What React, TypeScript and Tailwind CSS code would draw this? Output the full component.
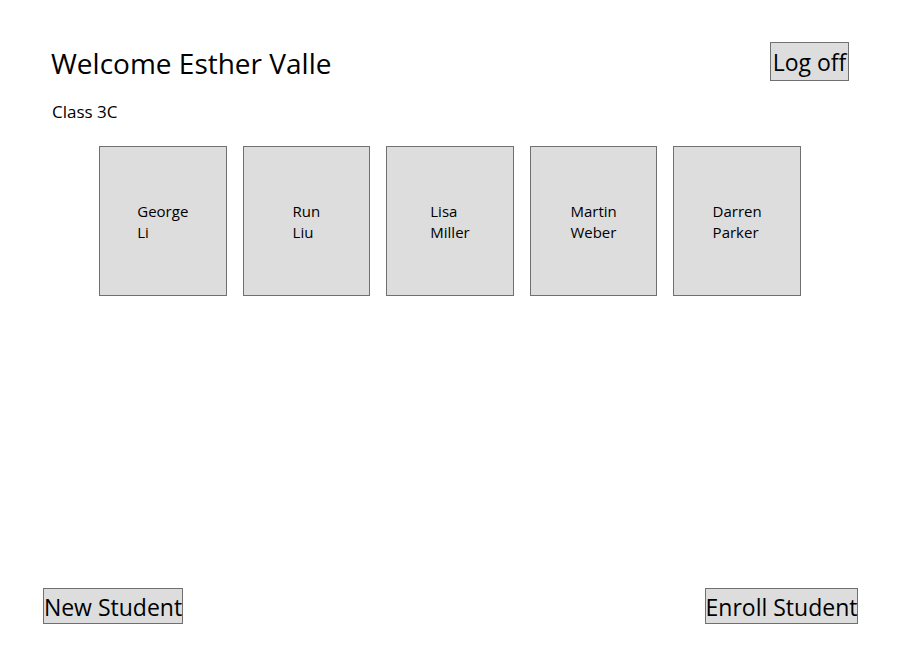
const students = [
  ["George", "Li"],
  ["Run", "Liu"],
  ["Lisa", "Miller"],
  ["Martin", "Weber"],
  ["Darren", "Parker"],
];

const button =
  "border border-[#707070] bg-[#dddddd] pt-0.5 text-[23px] whitespace-nowrap flex items-center justify-center";

export default function App() {
  return (
    <div className="flex min-h-screen flex-col bg-white pt-[42px] pb-[46px] font-['Open_Sans','Noto_Sans',sans-serif] text-black">
      <header className="flex items-start justify-between pr-[70px] pl-[51px]">
        <h1 className="pt-[3px] text-[28px] leading-9">Welcome Esther Valle</h1>
        <button type="button" className={`${button} h-[39px] w-[79px]`}>
          Log off
        </button>
      </header>
      <main className="flex-1">
        <h2 className="mt-[19px] pl-[52px] text-[17px] leading-6">Class 3C</h2>
        <ul className="mt-[22px] flex gap-4 pr-[118px] pl-[99px]">
          {students.map(([first, last]) => (
            <li key={first} className="flex-1">
              <button
                type="button"
                className="flex h-[150px] w-full items-center justify-center border border-[#707070] bg-[#dddddd] pt-0.5 text-left text-[15px] leading-[21px]"
              >
                <span>
                  {first}
                  <br />
                  {last}
                </span>
              </button>
            </li>
          ))}
        </ul>
      </main>
      <footer className="flex justify-between pr-[61px] pl-[43px]">
        <button type="button" className={`${button} h-9 w-[140px]`}>
          New Student
        </button>
        <button type="button" className={`${button} h-9 w-[153px]`}>
          Enroll Student
        </button>
      </footer>
    </div>
  );
}
